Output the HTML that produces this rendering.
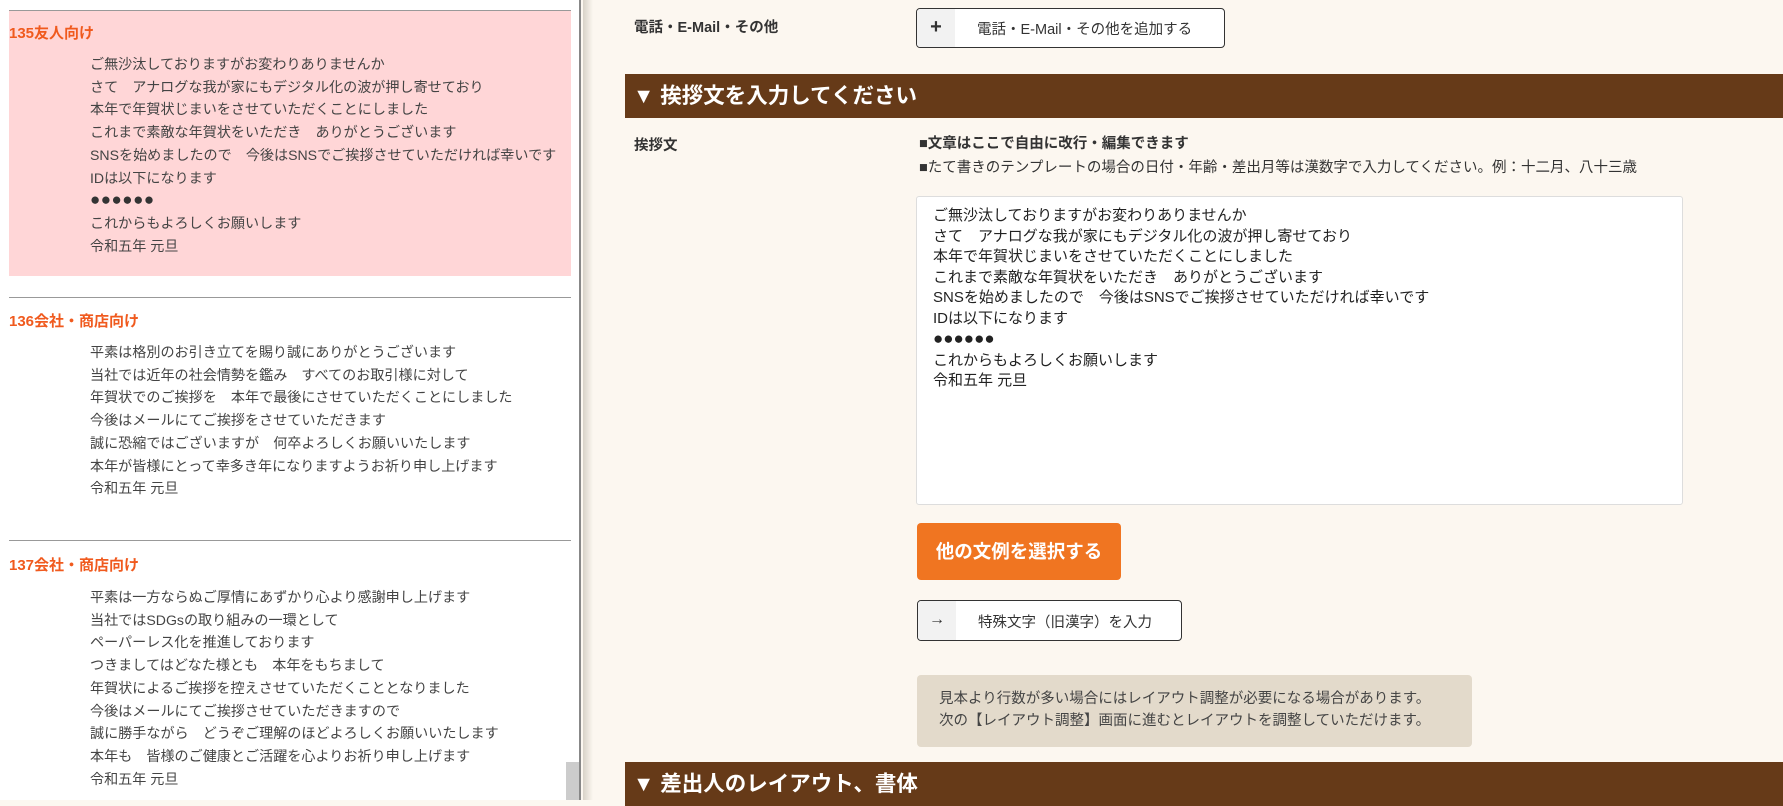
<!DOCTYPE html>
<html><head><meta charset="utf-8"><style>
*{margin:0;padding:0;box-sizing:border-box}
body{width:1783px;height:800px;overflow:hidden;position:relative;background:#fcf7f0;font-family:"Liberation Sans","Noto Sans CJK JP",sans-serif;color:#333}
.a{position:absolute;white-space:nowrap}
#left{position:absolute;left:0;top:0;width:581px;height:800px;background:#fff;border-right:2px solid #888}
.hr{position:absolute;left:9px;width:562px;height:1px;background:#999}
.tt{position:absolute;left:9px;font-size:15px;font-weight:bold;color:#f05a1e}
.body{position:absolute;left:90px;font-size:14.1px;line-height:22.7px;color:#444}
.dots{font-size:17px;letter-spacing:0.5px;color:#333}
.btn{position:absolute;border:1.5px solid #333;border-radius:4px;background:#fff;font-size:14.5px;color:#333}
.btn .ic{position:absolute;left:0;top:0;bottom:0;width:38px;background:#f2f2f2;border-radius:3px 0 0 3px;text-align:center;font-weight:bold}
.hd{position:absolute;left:625px;width:1158px;background:#663a18;color:#fff;font-weight:bold;font-size:21.5px;padding-left:8px}
</style></head><body>
<div id="left">
<div class="hr" style="top:10px"></div>
<div style="position:absolute;left:9px;top:11px;width:562px;height:265px;background:#ffd6d7"></div>
<div class="tt" style="top:22px">135友人向け</div>
<div class="body" style="top:53px">ご無沙汰しておりますがお変わりありませんか<br>さて　アナログな我が家にもデジタル化の波が押し寄せており<br>本年で年賀状じまいをさせていただくことにしました<br>これまで素敵な年賀状をいただき　ありがとうございます<br>SNSを始めましたので　今後はSNSでご挨拶させていただければ幸いです<br>IDは以下になります<br><span class="dots">●●●●●●</span><br>これからもよろしくお願いします<br>令和五年 元旦</div>
<div class="hr" style="top:297px"></div>
<div class="tt" style="top:310px">136会社・商店向け</div>
<div class="body" style="top:341px">平素は格別のお引き立てを賜り誠にありがとうございます<br>当社では近年の社会情勢を鑑み　すべてのお取引様に対して<br>年賀状でのご挨拶を　本年で最後にさせていただくことにしました<br>今後はメールにてご挨拶をさせていただきます<br>誠に恐縮ではございますが　何卒よろしくお願いいたします<br>本年が皆様にとって幸多き年になりますようお祈り申し上げます<br>令和五年 元旦</div>
<div class="hr" style="top:540px"></div>
<div class="tt" style="top:554px">137会社・商店向け</div>
<div class="body" style="top:586px">平素は一方ならぬご厚情にあずかり心より感謝申し上げます<br>当社ではSDGsの取り組みの一環として<br>ペーパーレス化を推進しております<br>つきましてはどなた様とも　本年をもちまして<br>年賀状によるご挨拶を控えさせていただくこととなりました<br>今後はメールにてご挨拶させていただきますので<br>誠に勝手ながら　どうぞご理解のほどよろしくお願いいたします<br>本年も　皆様のご健康とご活躍を心よりお祈り申し上げます<br>令和五年 元旦</div>
<div style="position:absolute;left:566px;top:762px;width:13px;height:38px;background:#ccc"></div>
</div>
<div style="position:absolute;left:583px;top:0;width:10px;height:800px;background:linear-gradient(90deg,#d8d2c8,#fcf7f0)"></div>

<div class="a" style="left:634px;top:16px;font-size:14.5px;font-weight:bold">電話・E-Mail・その他</div>
<div class="btn" style="left:916px;top:8px;width:309px;height:40px"><div class="ic" style="line-height:37px;font-size:20px">+</div><div class="a" style="left:60px;top:9px">電話・E-Mail・その他を追加する</div></div>

<div class="hd" style="top:74px;height:44px;line-height:44px">▼ 挨拶文を入力してください</div>

<div class="a" style="left:634px;top:134px;font-size:14.5px;font-weight:bold">挨拶文</div>
<div class="a" style="left:919px;top:132px;font-size:14.5px;font-weight:bold">■文章はここで自由に改行・編集できます</div>
<div class="a" style="left:919px;top:156px;font-size:14.5px">■たて書きのテンプレートの場合の日付・年齢・差出月等は漢数字で入力してください。例：十二月、八十三歳</div>
<div style="position:absolute;left:916px;top:196px;width:767px;height:309px;background:#fff;border:1px solid #ddd;border-radius:3px"></div>
<div class="a" style="left:933px;top:206px;font-size:15px;line-height:20.5px;color:#222">ご無沙汰しておりますがお変わりありませんか<br>さて　アナログな我が家にもデジタル化の波が押し寄せており<br>本年で年賀状じまいをさせていただくことにしました<br>これまで素敵な年賀状をいただき　ありがとうございます<br>SNSを始めましたので　今後はSNSでご挨拶させていただければ幸いです<br>IDは以下になります<br><span style="font-size:17px">●●●●●●</span><br>これからもよろしくお願いします<br>令和五年 元旦</div>

<div class="a" style="left:917px;top:523px;width:204px;height:57px;background:#f07521;border-radius:4px;color:#fff;font-weight:bold;font-size:18.5px;line-height:57px;text-align:center">他の文例を選択する</div>

<div class="btn" style="left:917px;top:600px;width:265px;height:41px"><div class="ic" style="line-height:38px;font-size:16px">→</div><div class="a" style="left:60px;top:10px">特殊文字（旧漢字）を入力</div></div>

<div style="position:absolute;left:917px;top:675px;width:555px;height:72px;background:#e3dacb;border-radius:4px"></div>
<div class="a" style="left:939px;top:688px;font-size:14.5px;line-height:22px;color:#444">見本より行数が多い場合にはレイアウト調整が必要になる場合があります。<br>次の【レイアウト調整】画面に進むとレイアウトを調整していただけます。</div>

<div class="hd" style="top:762px;height:44px;line-height:44px">▼ 差出人のレイアウト、書体</div>
</body></html>
